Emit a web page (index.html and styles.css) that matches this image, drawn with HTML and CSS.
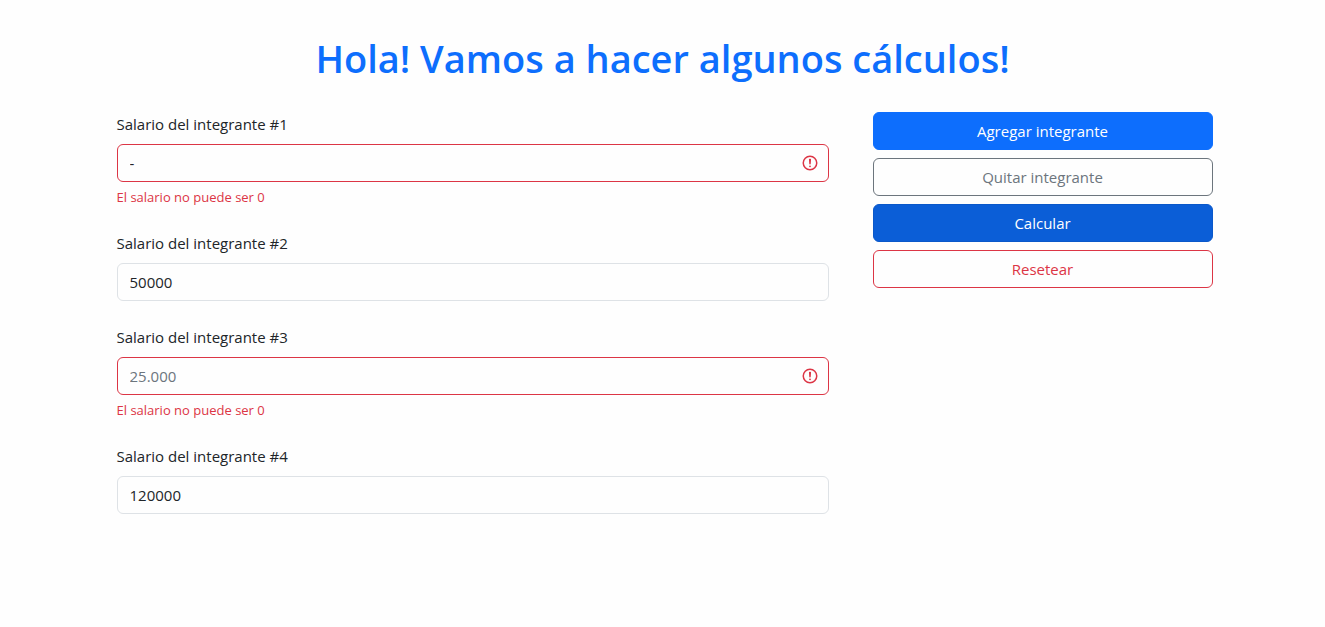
FILE: index.html
```html
<!DOCTYPE html>
<html lang="es">
<head>
<meta charset="utf-8">
<meta name="viewport" content="width=device-width, initial-scale=1">
<title>Cálculo de salarios</title>
<link rel="stylesheet" href="styles.css">
</head>
<body>
<main class="container">
  <h1 class="title">Hola! Vamos a hacer algunos cálculos!</h1>
  <form class="layout">
    <div class="members">
      <div class="field">
        <label class="label" for="salario-1">Salario del integrante #1</label>
        <div class="control">
          <input class="input input-invalid" id="salario-1" type="text" value="-" placeholder="25.000" aria-describedby="error-1">
          <svg class="alert-icon" viewBox="0 0 12 12" aria-hidden="true"><circle cx="6" cy="6" r="4.5"/><path d="M5.8 3.6h.4L6 6.5z"/><circle class="dot" cx="6" cy="8.2" r=".6"/></svg>
        </div>
        <p class="error" id="error-1">El salario no puede ser 0</p>
      </div>
      <div class="field">
        <label class="label" for="salario-2">Salario del integrante #2</label>
        <input class="input" id="salario-2" type="text" value="50000" placeholder="25.000">
      </div>
      <div class="field">
        <label class="label" for="salario-3">Salario del integrante #3</label>
        <div class="control">
          <input class="input input-invalid" id="salario-3" type="text" placeholder="25.000" aria-describedby="error-3">
          <svg class="alert-icon" viewBox="0 0 12 12" aria-hidden="true"><circle cx="6" cy="6" r="4.5"/><path d="M5.8 3.6h.4L6 6.5z"/><circle class="dot" cx="6" cy="8.2" r=".6"/></svg>
        </div>
        <p class="error" id="error-3">El salario no puede ser 0</p>
      </div>
      <div class="field">
        <label class="label" for="salario-4">Salario del integrante #4</label>
        <input class="input" id="salario-4" type="text" value="120000" placeholder="25.000">
      </div>
    </div>
    <div class="actions">
      <button class="button button-primary" type="button">Agregar integrante</button>
      <button class="button button-secondary" type="button">Quitar integrante</button>
      <button class="button button-primary button-active" type="button">Calcular</button>
      <button class="button button-danger" type="reset">Resetear</button>
    </div>
  </form>
</main>
</body>
</html>
```
FILE: styles.css
```css
* {
  box-sizing: border-box;
}

body {
  margin: 0;
  background: #fefefe;
  color: #212529;
  font-family: "Segoe UI", "Open Sans", "Noto Sans", sans-serif;
  font-size: 15px;
  line-height: 24px;
}

.container {
  max-width: 1140px;
  margin: 0 auto;
  padding: 34px 0;
}

.title {
  margin: 0 0 30px;
  color: #0d6efd;
  font-size: 38px;
  font-weight: 600;
  line-height: 48px;
  text-align: center;
}

.layout {
  display: grid;
  grid-template-columns: 712fr 340fr;
  column-gap: 44px;
  align-items: start;
  padding: 0 20px 0 24px;
}

.members {
  display: flex;
  flex-direction: column;
  gap: 24px;
}

.label {
  display: block;
  margin-bottom: 8px;
}

.control {
  position: relative;
}

.input {
  display: block;
  width: 100%;
  height: 38px;
  padding: 6px 12px;
  border: 1px solid #dee2e6;
  border-radius: 6px;
  background: #fefefe;
  color: #212529;
  font: inherit;
}

.input::placeholder {
  color: #6c757d;
}

.input-invalid {
  padding-right: 36px;
  border-color: #dc3545;
}

.alert-icon {
  position: absolute;
  top: 10px;
  right: 10px;
  width: 18px;
  height: 18px;
  fill: none;
  stroke: #dc3545;
  stroke-linejoin: round;
}

.dot {
  fill: #dc3545;
  stroke: none;
}

.error {
  margin: 5px 0 0;
  color: #dc3545;
  font-size: 13px;
  line-height: 20px;
}

.actions {
  display: grid;
  gap: 8px;
}

.button {
  height: 38px;
  padding: 6px 12px;
  border: 1px solid;
  border-radius: 6px;
  background: transparent;
  font: inherit;
}

.button-primary {
  border-color: #0d6efd;
  background: #0d6efd;
  color: #fff;
}

.button-active {
  border-color: #0a58ca;
  background: #0b5ed7;
}

.button-secondary {
  border-color: #6c757d;
  color: #6c757d;
}

.button-danger {
  border-color: #dc3545;
  color: #dc3545;
}
```
